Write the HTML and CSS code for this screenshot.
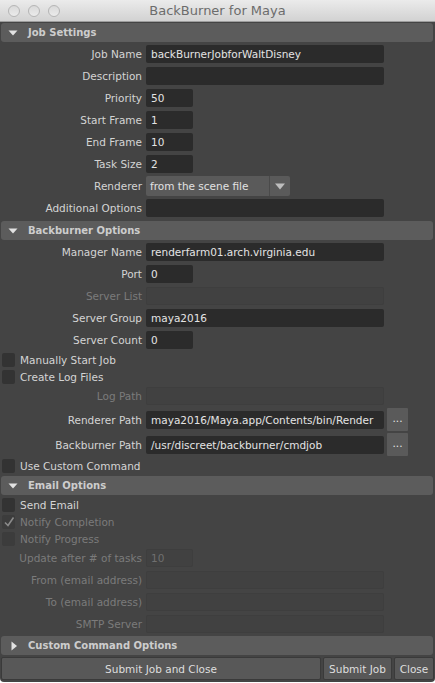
FILE: index.html
```html
<!DOCTYPE html>
<html>
<head>
<meta charset="utf-8">
<title>BackBurner for Maya</title>
<link rel="stylesheet" href="styles.css">
</head>
<body>
<div class="window">
  <div class="titlebar">
    <div class="lights"><span></span><span></span><span></span></div>
    <div class="title">BackBurner for Maya</div>
  </div>
  <div class="content">
    <div class="section-header">
      <svg class="tri" width="10" height="8" viewBox="0 0 10 8"><path d="M0.5 1.5 L9.5 1.5 L5 6.5 Z" fill="#e2e2e2"/></svg>
      <span>Job Settings</span>
    </div>
    <div class="group first">
      <div class="row"><span class="lbl">Job Name</span><div class="field wide">backBurnerJobforWaltDisney</div></div>
      <div class="row"><span class="lbl">Description</span><div class="field wide"></div></div>
      <div class="row"><span class="lbl">Priority</span><div class="field short">50</div></div>
      <div class="row"><span class="lbl">Start Frame</span><div class="field short">1</div></div>
      <div class="row"><span class="lbl">End Frame</span><div class="field short">10</div></div>
      <div class="row"><span class="lbl">Task Size</span><div class="field short">2</div></div>
      <div class="row"><span class="lbl">Renderer</span>
        <div class="dropdown"><span class="dd-text">from the scene file</span><span class="dd-arrow"><svg width="10" height="7" viewBox="0 0 10 7"><path d="M0 0.5 L10 0.5 L5 6.5 Z" fill="#bdbdbd"/></svg></span></div>
      </div>
      <div class="row"><span class="lbl">Additional Options</span><div class="field wide"></div></div>
    </div>

    <div class="section-header gap2">
      <svg class="tri" width="10" height="8" viewBox="0 0 10 8"><path d="M0.5 1.5 L9.5 1.5 L5 6.5 Z" fill="#e2e2e2"/></svg>
      <span>Backburner Options</span>
    </div>
    <div class="group">
      <div class="row"><span class="lbl">Manager Name</span><div class="field wide">renderfarm01.arch.virginia.edu</div></div>
      <div class="row"><span class="lbl">Port</span><div class="field short">0</div></div>
      <div class="row"><span class="lbl disabled">Server List</span><div class="field wide off"></div></div>
      <div class="row"><span class="lbl">Server Group</span><div class="field wide">maya2016</div></div>
      <div class="row"><span class="lbl">Server Count</span><div class="field short">0</div></div>
      <div class="crow"><span class="box"></span><span class="clbl">Manually Start Job</span></div>
      <div class="crow"><span class="box"></span><span class="clbl">Create Log Files</span></div>
      <div class="row"><span class="lbl disabled">Log Path</span><div class="field wide off"></div></div>
      <div class="row prow"><span class="lbl">Renderer Path</span><div class="field wide">maya2016/Maya.app/Contents/bin/Render</div><div class="dots">...</div></div>
      <div class="row prow"><span class="lbl">Backburner Path</span><div class="field wide">/usr/discreet/backburner/cmdjob</div><div class="dots">...</div></div>
      <div class="crow tall"><span class="box"></span><span class="clbl">Use Custom Command</span></div>
    </div>

    <div class="section-header gap1">
      <svg class="tri" width="10" height="8" viewBox="0 0 10 8"><path d="M0.5 1.5 L9.5 1.5 L5 6.5 Z" fill="#e2e2e2"/></svg>
      <span>Email Options</span>
    </div>
    <div class="group first-email">
      <div class="crow"><span class="box"></span><span class="clbl">Send Email</span></div>
      <div class="crow"><span class="box off"><svg width="12" height="12" viewBox="0 0 12 12"><path d="M2 6.5 L5 9.5 L10.5 1.5" fill="none" stroke="#8a8a8a" stroke-width="1.6"/></svg></span><span class="clbl disabled">Notify Completion</span></div>
      <div class="crow"><span class="box off"></span><span class="clbl disabled">Notify Progress</span></div>
      <div class="row"><span class="lbl disabled">Update after # of tasks</span><div class="field short off">10</div></div>
      <div class="row"><span class="lbl disabled">From (email address)</span><div class="field wide off"></div></div>
      <div class="row"><span class="lbl disabled">To (email address)</span><div class="field wide off"></div></div>
      <div class="row"><span class="lbl disabled">SMTP Server</span><div class="field wide off"></div></div>
    </div>

    <div class="section-header">
      <svg class="tri right" width="8" height="10" viewBox="0 0 8 10"><path d="M1.5 0.5 L7 5 L1.5 9.5 Z" fill="#e2e2e2"/></svg>
      <span>Custom Command Options</span>
    </div>

    <div class="buttons">
      <div class="btn main">Submit Job and Close</div>
      <div class="btn submit">Submit Job</div>
      <div class="btn close">Close</div>
    </div>
  </div>
</div>
</body>
</html>
```
FILE: styles.css
```css
html, body {
  margin: 0;
  padding: 0;
  background: #ffffff;
}
body {
  font-family: "DejaVu Sans", "Liberation Sans", sans-serif;
  font-size: 10.5px;
}
.window {
  width: 435px;
  height: 682px;
  background: #444444;
  border-radius: 0 0 4px 4px;
  overflow: hidden;
  display: flex;
  flex-direction: column;
}
.titlebar {
  height: 22px;
  flex: none;
  background: linear-gradient(#ebebeb, #d2d2d2);
  border-bottom: 1px solid #9d9d9d;
  box-sizing: border-box;
  position: relative;
  display: flex;
  align-items: center;
  justify-content: center;
}
.lights {
  position: absolute;
  left: 8px;
  top: 5px;
  display: flex;
  gap: 8px;
}
.lights span {
  width: 10px;
  height: 10px;
  border-radius: 50%;
  background: linear-gradient(#d9d9d9, #ebebeb);
  border: 1px solid #b5b5b5;
}
.title {
  font-size: 13px;
  color: #6c6c6c;
}
.content {
  flex: 1;
  display: flex;
  flex-direction: column;
}
.section-header {
  height: 19px;
  margin: 1px 2px 0 1px;
  background: #5c5c5c;
  border-radius: 3px;
  display: flex;
  align-items: center;
  color: #cdcdcd;
  font-weight: bold;
  font-size: 10px;
  flex: none;
}
.section-header.gap2 { margin-top: 2px; }
.section-header.gap1 { margin-top: 1px; }
.tri {
  margin-left: 7px;
  margin-right: 10px;
}
.tri.right {
  margin-left: 9px;
  margin-right: 10px;
}
.group {
  display: flex;
  flex-direction: column;
  margin-top: 1px;
}
.row {
  height: 22px;
  display: flex;
  align-items: center;
  flex: none;
}
.row.prow { height: 25px; }
.lbl {
  width: 142px;
  margin-right: 4px;
  text-align: right;
  color: #d4d4d4;
  white-space: nowrap;
}
.disabled { color: #7b7b7b; }
.field {
  height: 18px;
  line-height: 18px;
  box-sizing: border-box;
  padding: 0 5px;
  background: #2b2b2b;
  border-radius: 2px;
  color: #e4e4e4;
  white-space: nowrap;
  overflow: hidden;
}
.field.wide { width: 238px; }
.field.short { width: 47px; }
.field.off {
  background: #414141;
  color: #6f6f6f;
  box-shadow: inset 0 0 0 1px #3e3e3e;
}
.dropdown {
  width: 144px;
  height: 20px;
  background: #5a5a5a;
  border-radius: 2px;
  display: flex;
  color: #e2e2e2;
}
.dd-text {
  width: 124px;
  line-height: 20px;
  padding-left: 4px;
  box-sizing: border-box;
  border-right: 1px solid #4a4a4a;
}
.dd-arrow {
  flex: 1;
  display: flex;
  align-items: center;
  justify-content: center;
}
.dots {
  width: 21px;
  height: 23px;
  margin-left: 3px;
  background: #5a5a5a;
  border-radius: 1px;
  color: #e6e6e6;
  text-align: center;
  line-height: 21px;
}
.crow {
  height: 17px;
  display: flex;
  align-items: center;
  flex: none;
}
.crow.tall { height: 18px; }
.box {
  width: 13px;
  height: 14px;
  margin-left: 2px;
  margin-right: 5px;
  background: #333333;
  border-radius: 2px;
  display: flex;
  align-items: center;
  justify-content: center;
}
.box.off { background: #3c3c3c; }
.clbl {
  color: #d4d4d4;
}
.clbl.disabled { color: #7b7b7b; }
.buttons {
  display: flex;
  margin: 2px 1px 0 1px;
  height: 23px;
  gap: 2px;
}
.btn {
  background: #585858;
  border: 1px solid #3a3a3a;
  border-radius: 2px;
  color: #dedede;
  display: flex;
  align-items: center;
  justify-content: center;
  box-sizing: border-box;
}
.btn.main { width: 320px; }
.btn.submit { width: 69px; }
.btn.close { flex: 1; }
```
